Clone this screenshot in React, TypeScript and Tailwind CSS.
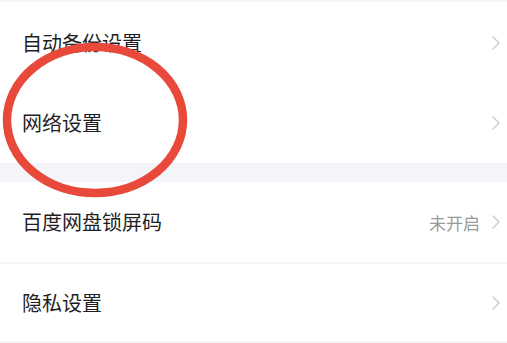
import React from "react";

const Chevron = () => (
  <svg width="8" height="14" viewBox="0 0 8 14" className="shrink-0">
    <path d="M1 1 L7 7 L1 13" fill="none" stroke="#c9c9cc" strokeWidth="1.4" strokeLinecap="round" strokeLinejoin="round" />
  </svg>
);

const Row = ({ label, value, h }: { label: string; value?: string; h: string }) => (
  <div className={`flex items-center justify-between pl-[22px] pr-[7px] bg-white ${h}`}>
    <span className="text-[20px] text-[#1f1f1f] leading-none">{label}</span>
    <div className="flex items-center gap-[12px]">
      {value && <span className="text-[17px] text-[#9a9a9a] leading-none">{value}</span>}
      <Chevron />
    </div>
  </div>
);

export default function App() {
  return (
    <div
      className="relative w-[507px] h-[343px] overflow-hidden bg-white"
      style={{ fontFamily: '"Noto Sans CJK SC", "Noto Sans", sans-serif' }}
    >
      <div className="h-[2px] bg-[#f3f4f6]" />
      <Row label="自动备份设置" h="h-[81px]" />
      <Row label="网络设置" h="h-[80px]" />
      <div className="h-[19px] bg-[#f4f5f8]" />
      <Row label="百度网盘锁屏码" value="未开启" h="h-[80px]" />
      <div className="h-[2px] bg-[#f4f5f7]" />
      <Row label="隐私设置" h="h-[77px]" />
      <div className="h-[2px] bg-[#f4f5f7]" />
      <svg className="absolute left-0 top-0 pointer-events-none" width="507" height="343">
        <ellipse cx="95" cy="120" rx="88" ry="73" fill="none" stroke="#e8493a" strokeWidth="8.5" />
      </svg>
    </div>
  );
}
